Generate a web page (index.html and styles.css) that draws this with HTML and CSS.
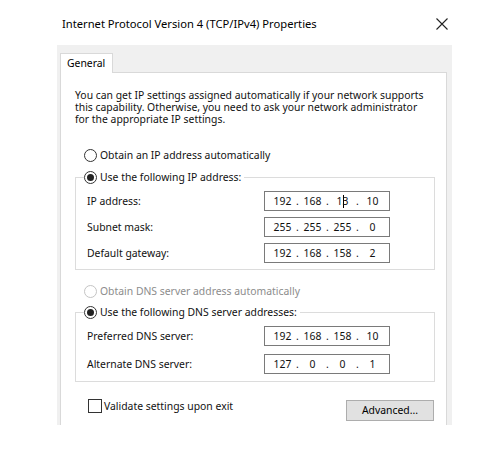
FILE: index.html
```html
<!DOCTYPE html>
<html lang="en">
<head>
<meta charset="utf-8">
<title>Internet Protocol Version 4 (TCP/IPv4) Properties</title>
<link rel="stylesheet" href="styles.css">
</head>
<body>
<div class="window">
  <div class="titlebar">
    <span class="title">Internet Protocol Version 4 (TCP/IPv4) Properties</span>
    <svg class="close" width="12" height="12" viewBox="0 0 12 12"><path d="M0.5 0.5 L11.5 11.5 M11.5 0.5 L0.5 11.5" stroke="#222" stroke-width="1.1" fill="none"/></svg>
  </div>
  <div class="dialog">
    <div class="tabs"><div class="tab">General</div></div>
    <div class="panel">
      <p class="intro">You can get IP settings assigned automatically if your network supports<br>this capability. Otherwise, you need to ask your network administrator<br>for the appropriate IP settings.</p>

      <div class="option"><span class="radio"></span><span>Obtain an IP address automatically</span></div>

      <fieldset class="group">
        <legend class="option"><span class="radio checked"></span><span>Use the following IP address:</span></legend>
        <div class="row"><span class="label">IP address:</span><div class="ip"><span class="oct">192</span><span class="dot">.</span><span class="oct">168</span><span class="dot">.</span><span class="oct">1<span class="caret"></span>3</span><span class="dot">.</span><span class="oct">10</span></div></div>
        <div class="row"><span class="label">Subnet mask:</span><div class="ip"><span class="oct">255</span><span class="dot">.</span><span class="oct">255</span><span class="dot">.</span><span class="oct">255</span><span class="dot">.</span><span class="oct">0</span></div></div>
        <div class="row"><span class="label">Default gateway:</span><div class="ip"><span class="oct">192</span><span class="dot">.</span><span class="oct">168</span><span class="dot">.</span><span class="oct">158</span><span class="dot">.</span><span class="oct">2</span></div></div>
      </fieldset>

      <div class="option disabled"><span class="radio"></span><span>Obtain DNS server address automatically</span></div>

      <fieldset class="group dns">
        <legend class="option"><span class="radio checked"></span><span>Use the following DNS server addresses:</span></legend>
        <div class="row"><span class="label">Preferred DNS server:</span><div class="ip"><span class="oct">192</span><span class="dot">.</span><span class="oct">168</span><span class="dot">.</span><span class="oct">158</span><span class="dot">.</span><span class="oct">10</span></div></div>
        <div class="row"><span class="label">Alternate DNS server:</span><div class="ip"><span class="oct">127</span><span class="dot">.</span><span class="oct">0</span><span class="dot">.</span><span class="oct">0</span><span class="dot">.</span><span class="oct">1</span></div></div>
      </fieldset>

      <div class="footer">
        <div class="check"><span class="box"></span><span>Validate settings upon exit</span></div>
        <div class="button">Advanced...</div>
      </div>
    </div>
  </div>
</div>
</body>
</html>
```
FILE: styles.css
```css
* { box-sizing: border-box; }
html, body { margin: 0; padding: 0; background: #fff; }
body {
  width: 500px; height: 454px; overflow: hidden;
  font-family: "Noto Sans", "Open Sans", sans-serif;
  font-size: 10.4px; color: #111;
}
.window { width: 500px; }
.titlebar {
  height: 45px;
  display: flex; align-items: center; justify-content: space-between;
  padding: 2px 52px 0 62px;
}
.title { font-size: 11.2px; color: #000; }
.close { display: block; }
.dialog {
  margin-left: 57px; width: 395px; height: 380px;
  background: #f0f0f0;
  padding: 8px 5px 0 3px;
  display: flex; flex-direction: column;
}
.tabs { display: flex; height: 19px; position: relative; z-index: 1; }
.tab {
  width: 53px; height: 20px;
  background: #fff; border: 1px solid #d9d9d9; border-bottom: none;
  padding-left: 6px; line-height: 18px; color: #000;
}
.panel {
  flex: 1;
  background: #fff; border: 1px solid #d9d9d9; border-bottom: none;
  padding: 16px 11px 0 14px;
}
.intro { margin: 0; line-height: 12px; color: #111; white-space: nowrap; }
.option { display: flex; align-items: center; gap: 3px; height: 14px; line-height: 14px; }
.panel > .option { margin-left: 9px; }
.panel > .option:first-of-type { margin-top: 23px; }
.radio {
  width: 13px; height: 13px; border-radius: 50%;
  border: 1px solid #333; background: #fff;
  display: flex; align-items: center; justify-content: center;
  flex: none;
}
.radio.checked::after {
  content: ""; width: 7px; height: 7px; border-radius: 50%; background: #222;
}
.disabled { color: #8c8c8c; }
.disabled .radio { border-color: #c4c4c4; }
.group {
  margin: 8px 0 0 0; padding: 0 0 6px 8px;
  border: 1px solid #dcdcdc; min-width: 0;
}
.group legend { padding: 0 3px 0 0; }
.row { display: flex; align-items: center; height: 20px; margin-top: 6px; padding-left: 3px; }
.group .row:first-of-type { margin-top: 7px; }
.label { width: 177px; }
.ip {
  width: 126px; height: 20px;
  border: 1px solid #7a7a7a; background: #fff;
  display: flex; align-items: center; padding-left: 6px;
}
.oct { width: 23px; text-align: center; }
.dot { width: 7px; text-align: center; }
.caret { display: inline-block; width: 1px; height: 13px; background: #000; vertical-align: middle; margin: 0 -1px 0 0; }
.panel > .option.disabled { margin-top: 14px; }
.group.dns { margin-top: 7px; padding-bottom: 7px; }
.dns .row { margin-top: 8px; }
.dns .row:first-of-type { margin-top: 7px; }
.footer { display: flex; justify-content: space-between; align-items: flex-start; margin-top: 17px; padding-left: 13px; }
.check { display: flex; align-items: center; gap: 2px; height: 14px; }
.box { width: 14px; height: 14px; border: 1px solid #333; background: #fff; }
.button {
  width: 88px; height: 21px; margin-top: 1px; margin-right: 1px;
  background: #e1e1e1; border: 1px solid #adadad;
  text-align: center; line-height: 19px; color: #000;
}
```
